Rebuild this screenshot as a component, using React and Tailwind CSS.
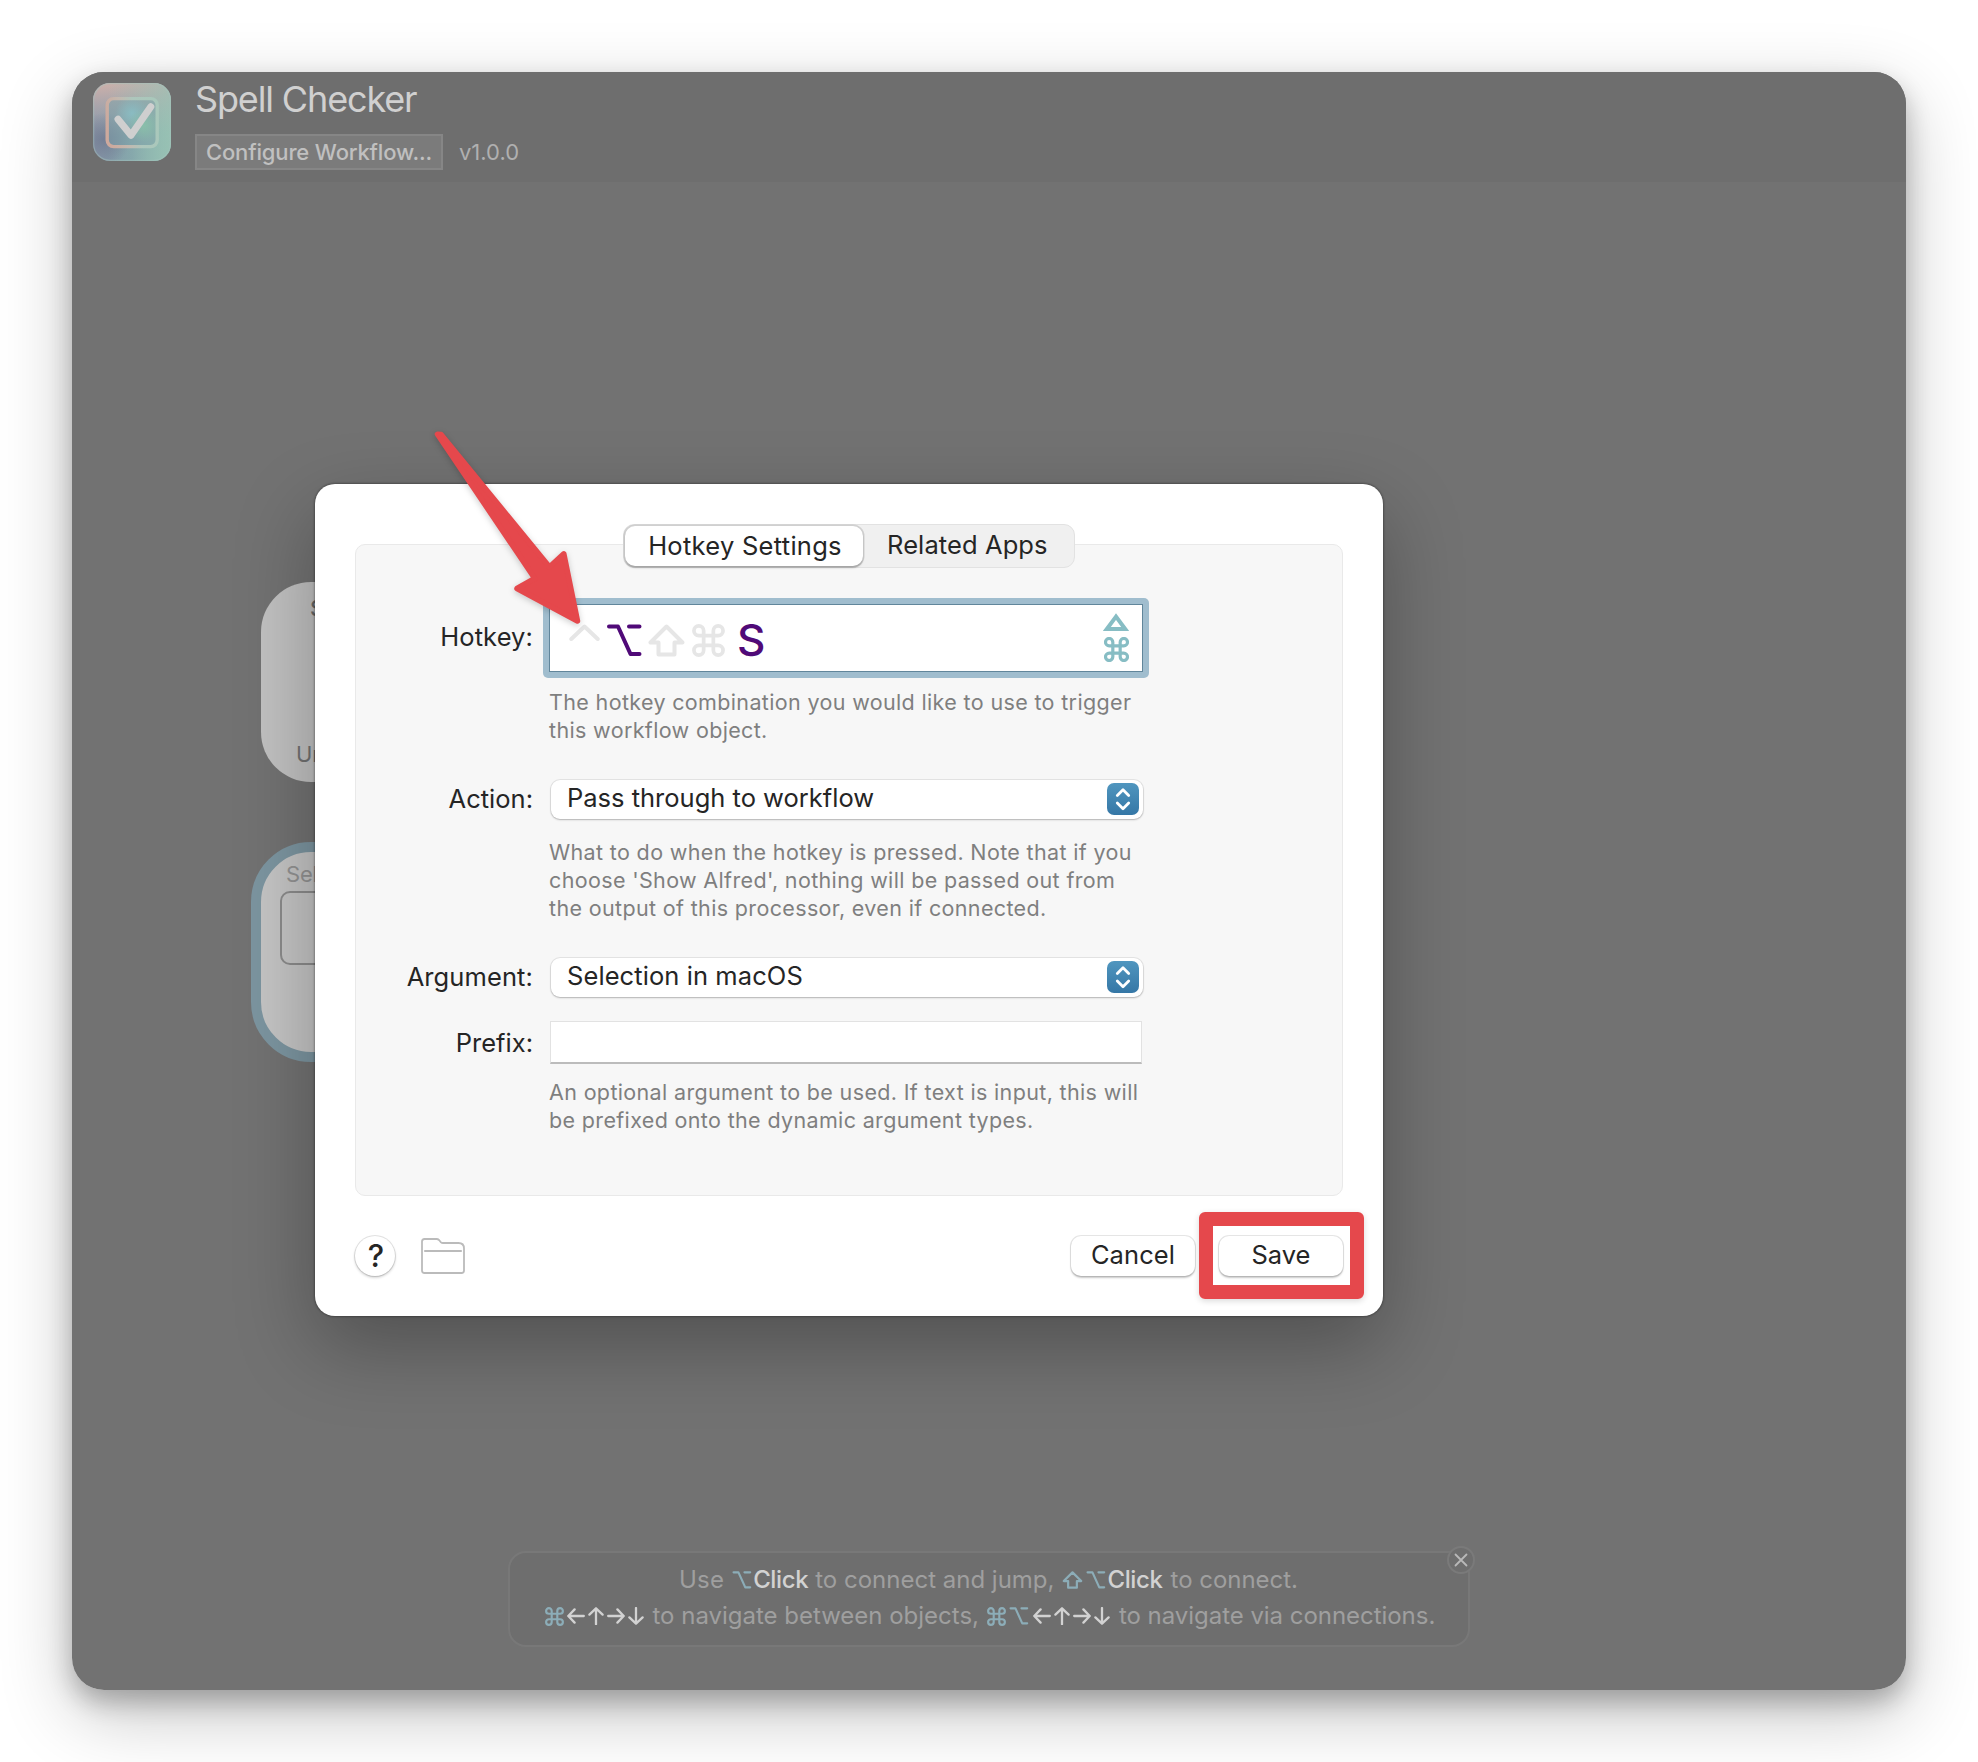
import React from "react";

function CommandGlyph({ className, stroke = 2.3 }) {
  return (
    <svg viewBox="1.8 1.8 20.4 20.4" fill="none" stroke="currentColor" strokeWidth={stroke} className={className}>
      <path d="M15 6v12a3 3 0 1 0 3-3H6a3 3 0 1 0 3 3V6a3 3 0 1 0-3 3h12a3 3 0 1 0-3-3" />
    </svg>
  );
}

function OptionGlyph({ className }) {
  return (
    <svg viewBox="0 0 35 33" fill="none" stroke="currentColor" strokeWidth="4" strokeLinecap="round" strokeLinejoin="round" className={className}>
      <path d="M2 2.5H11L23.5 30H32.5M22 2.5H32.5" />
    </svg>
  );
}

function ShiftGlyph({ className }) {
  return (
    <svg viewBox="0 0 37 33" fill="none" stroke="currentColor" strokeWidth="4" strokeLinecap="round" strokeLinejoin="round" className={className}>
      <path d="M18.5 2.5L2.5 18.5H10.5V30.5H26.5V18.5H34.5Z" />
    </svg>
  );
}

function Arrow({ d, className }) {
  return (
    <svg viewBox="0 0 18 18" fill="none" stroke="currentColor" strokeWidth="2.3" strokeLinecap="round" strokeLinejoin="round" className={className}>
      <path d={d} />
    </svg>
  );
}

function ArrowKeys() {
  return (
    <span className="flex items-center gap-[2px] text-[#d2d2d2]">
      <Arrow d="M1.3 9H16.8M7.6 2.4L1.3 9l6.3 6.6" className="size-[18px]" />
      <Arrow d="M9 1.3V17.2M2.4 7.6L9 1.3l6.6 6.3" className="size-[18px]" />
      <Arrow d="M1.2 9H16.7M10.4 2.4L16.7 9l-6.3 6.6" className="size-[18px]" />
      <Arrow d="M9 1V16.7M2.4 10.4L9 16.7l6.6-6.3" className="size-[18px]" />
    </span>
  );
}

function AppIcon() {
  return (
    <svg viewBox="0 0 78 78" className="size-[78px] shrink-0">
      <defs>
        <linearGradient id="base" x1="0" y1="0" x2="1" y2="0">
          <stop offset="0" stopColor="#8895a8" />
          <stop offset="0.5" stopColor="#7d9fa8" />
          <stop offset="1" stopColor="#8dc3b2" />
        </linearGradient>
        <linearGradient id="warm" x1="0.2" y1="0" x2="0.3" y2="1">
          <stop offset="0" stopColor="#cdb0aa" />
          <stop offset="0.45" stopColor="#b9aeb0" stopOpacity="0.35" />
          <stop offset="0.7" stopColor="#b9aeb0" stopOpacity="0" />
        </linearGradient>
        <linearGradient id="sage" x1="0.2" y1="0" x2="1" y2="0">
          <stop offset="0" stopColor="#a3c3b8" stopOpacity="0" />
          <stop offset="1" stopColor="#9cc0b4" stopOpacity="0.7" />
        </linearGradient>
        <radialGradient id="dusk" cx="0.14" cy="0.72" r="0.34">
          <stop offset="0" stopColor="#717990" stopOpacity="0.8" />
          <stop offset="1" stopColor="#717990" stopOpacity="0" />
        </radialGradient>
        <radialGradient id="mint" cx="0.75" cy="0.55" r="0.35">
          <stop offset="0" stopColor="#89bfaa" />
          <stop offset="1" stopColor="#89bfaa" stopOpacity="0" />
        </radialGradient>
        <radialGradient id="aqua" cx="0.5" cy="0.3" r="0.35">
          <stop offset="0" stopColor="#8abcc2" />
          <stop offset="1" stopColor="#8abcc2" stopOpacity="0" />
        </radialGradient>
        <linearGradient id="ring" x1="0" y1="0.6" x2="1" y2="0.4">
          <stop offset="0" stopColor="#cda99d" />
          <stop offset="0.35" stopColor="#c2b9b0" />
          <stop offset="0.6" stopColor="#adc6bc" />
          <stop offset="1" stopColor="#a9c8bb" />
        </linearGradient>
      </defs>
      <rect width="78" height="78" rx="17" fill="url(#base)" />
      <rect width="78" height="78" rx="17" fill="url(#warm)" />
      <rect width="78" height="78" rx="17" fill="url(#sage)" />
      <rect width="78" height="78" rx="17" fill="url(#dusk)" />
      <rect x="15" y="16" width="48" height="48" rx="6" fill="#7d9fa8" fillOpacity="0.5" />
      <rect x="15" y="16" width="48" height="48" rx="6" fill="url(#aqua)" />
      <rect x="15" y="16" width="48" height="48" rx="6" fill="url(#mint)" />
      <rect x="0.7" y="0.7" width="76.6" height="76.6" rx="16.4" fill="none" stroke="#a5c4bd" strokeOpacity="0.45" strokeWidth="1.2" />
      <rect x="14.2" y="15.6" width="50" height="48" rx="6.5" fill="none" stroke="url(#ring)" strokeWidth="3.4" />
      <path d="M25 36.3L38 52.2L57.8 23.8" fill="none" stroke="#cfcfcf" strokeWidth="7" strokeLinecap="round" strokeLinejoin="round" />
    </svg>
  );
}

function Header() {
  return (
    <header className="flex h-[110px] shrink-0 gap-6 bg-[#6e6e6e] pl-[21px] pt-[9px]">
      <div className="pt-0.5">
        <AppIcon />
      </div>
      <div className="flex flex-col gap-[17px]">
        <h1 className="text-[36px] leading-9 tracking-[-1.14px] text-[#d0d0d0]">Spell Checker</h1>
        <div className="flex items-center gap-4">
          <button className="flex h-9 w-[248px] items-center justify-center border-2 border-[#868686] bg-[#7b7b7b] text-[22px] font-medium tracking-[-0.15px] text-[#c0c0c0]">
            Configure Workflow...
          </button>
          <span className="text-[22px] text-[#b0b0b0]">v1.0.0</span>
        </div>
      </div>
    </header>
  );
}

function Nodes() {
  return (
    <>
      <div className="absolute left-[189px] top-[400px] flex h-[200px] w-[280px] flex-col justify-between rounded-[50px] bg-[#c1c1c1] pb-[14px] pt-3 text-[22px] leading-7 text-[#717171]">
        <span className="pl-[49px] font-medium text-[#6a6a6a]">Spell Check</span>
        <span className="pl-[35px]">Universal Action</span>
      </div>
      <div className="absolute left-[179px] top-[660px] h-[220px] w-[300px] rounded-[60px] border-[10px] border-[#7c95a0] bg-[#c4c4c4] pt-2">
        <div className="pl-[25px] text-[22px] leading-7 tracking-[-0.2px] text-[#929292]">Selection</div>
        <div className="ml-[19px] mt-[3px] h-[74px] w-[220px] rounded-[10px] border-2 border-[#8b8b8b]" />
      </div>
    </>
  );
}

function Label({ children, className = "" }) {
  return <div className={"w-[177px] shrink-0 text-right text-[25.5px] leading-8 text-[#252525] " + className}>{children}</div>;
}

function Help({ children, className = "" }) {
  return <p className={"ml-[193px] text-[21.5px] leading-7 tracking-[0.35px] text-[#7f7f7f] " + className}>{children}</p>;
}

function Select({ children, className = "" }) {
  return (
    <div className={"ml-[18px] flex h-[39px] w-[592px] items-center justify-between rounded-[9px] bg-white pl-4 pr-1 text-[25.5px] leading-8 text-[#252525] shadow-[0_0_0_1px_rgba(0,0,0,0.07),0_1px_2px_rgba(0,0,0,0.22)] " + className}>
      <span className="-mt-[3px]">{children}</span>
      <span className="-mt-px flex h-8 w-8 items-center justify-center rounded-[7px] bg-linear-to-b from-[#5096bf] to-[#3577a6] text-white">
        <svg viewBox="0 0 32 32" fill="none" stroke="currentColor" strokeWidth="2.8" strokeLinecap="round" strokeLinejoin="round" className="size-8">
          <path d="M10.3 12.4L16 6.7l5.7 5.7M10.3 20L16 25.7l5.7-5.7" />
        </svg>
      </span>
    </div>
  );
}

function Dialog() {
  return (
    <section className="absolute left-[243px] top-[302px] flex h-[832px] w-[1068px] flex-col rounded-[20px] bg-white px-10 pt-10 shadow-[0_30px_80px_rgba(0,0,0,0.29),0_0_2px_1px_rgba(0,0,0,0.28)]">
      <div className="relative z-10 ml-[268px] flex h-11 w-[452px] rounded-[11px] border border-[#e2e2e2] bg-[#f0f0f0] text-[25.5px] leading-8 text-[#252525]">
        <div className="ml-px mt-px flex h-[40px] w-[238px] items-center justify-center rounded-[10px] bg-white tracking-[0.28px] shadow-[0_0_0_1.5px_rgba(0,0,0,0.12),0_1.5px_2px_rgba(0,0,0,0.22)]">
          <span className="-mt-px pl-0.5">Hotkey Settings</span>
        </div>
        <div className="flex h-[39px] flex-1 items-center pl-6 tracking-[0.1px]">Related Apps</div>
      </div>

      <div className="-mt-6 h-[652px] rounded-[10px] border border-[#e9e9e9] bg-[#f7f7f7] pt-[53px]">
        <div className="flex items-center">
          <Label className="-mt-0.5 tracking-[0.1px]">Hotkey:</Label>
          <div className="ml-[10px] h-20 w-[606px] rounded-[5px] bg-[#a0bdce] p-[6px]">
            <div className="flex h-full items-center justify-between border border-[#61869b] bg-white pl-[19px] pr-[13px]">
              <div className="flex items-center pt-[5px] text-[#e6e6e6]">
                <svg viewBox="0 0 31 33" fill="none" stroke="currentColor" strokeWidth="4" strokeLinecap="round" strokeLinejoin="round" className="h-[33px] w-[31px]">
                  <path d="M2.3 15L15.5 2.5L28.7 15" />
                </svg>
                <OptionGlyph className="ml-[7px] h-[33px] w-[35px] text-[#500a78]" />
                <ShiftGlyph className="ml-1.5 h-[33px] w-[37px]" />
                <CommandGlyph className="ml-[7px] size-[33px]" />
                <span className="ml-3 text-[44px] font-medium leading-[33px] text-[#500a78]">S</span>
              </div>
              <div className="-mt-px flex flex-col items-center gap-[6px] text-[#87bdc4]">
                <svg viewBox="0 0 26 18" fill="none" stroke="currentColor" strokeWidth="4" className="h-[18px] w-[26px]">
                  <path d="M13 3.6L3.8 16H22.2Z" />
                </svg>
                <CommandGlyph className="size-[25px]" stroke={2.6} />
              </div>
            </div>
          </div>
        </div>
        <Help className="mt-[10px]">
          The hotkey combination you would like to use to trigger
          <br />
          this workflow object.
        </Help>

        <div className="mt-9 flex items-center">
          <Label className="-mt-0.5">Action:</Label>
          <Select>Pass through to workflow</Select>
        </div>
        <Help className="mt-[19px]">
          What to do when the hotkey is pressed. Note that if you
          <br />
          choose 'Show Alfred', nothing will be passed out from
          <br />
          the output of this processor, even if connected.
        </Help>

        <div className="mt-9 flex items-center">
          <Label className="-mt-0.5 tracking-[0.1px]">Argument:</Label>
          <Select className="tracking-[0.08px]">Selection in macOS</Select>
        </div>

        <div className="mt-6 flex items-center">
          <Label>Prefix:</Label>
          <div className="ml-[17px] h-[43px] w-[592px] border border-b-2 border-[#e2e2e2] border-b-[#bcbcbc] bg-white" />
        </div>
        <Help className="mt-[14px]">
          An optional argument to be used. If text is input, this will
          <br />
          be prefixed onto the dynamic argument types.
        </Help>
      </div>

      <div className="mt-10 flex h-10 items-center text-[25.5px] leading-8 text-[#252525]">
        <div className="flex size-10 items-center justify-center rounded-full bg-white pl-0.5 text-[31px] font-medium shadow-[0_0_0_1px_rgba(0,0,0,0.1),0_1.5px_3px_rgba(0,0,0,0.22)]">?</div>
        <svg viewBox="0 0 44 36" fill="none" stroke="#bbbbbb" strokeWidth="1.8" strokeLinejoin="round" className="ml-[26px] h-9 w-11">
          <path d="M1 3.5Q1 1 3.5 1H15.5Q17 1 18 2L20 4.3Q20.7 5 22 5H37.5Q43 5 43 10.5V32.5Q43 35 40.5 35H3.5Q1 35 1 32.5ZM3.2 13H40.8" />
        </svg>
        <button className="ml-auto h-10 w-[124px] rounded-[10px] bg-white pb-0.5 tracking-[0.1px] shadow-[0_0_0_1px_rgba(0,0,0,0.09),0_1.5px_2px_rgba(0,0,0,0.22)]">Cancel</button>
        <div className="relative ml-6">
          <button className="h-10 w-[124px] rounded-[10px] bg-white pb-0.5 shadow-[0_0_0_1px_rgba(0,0,0,0.09),0_1.5px_2px_rgba(0,0,0,0.22)]">Save</button>
          <div className="absolute -left-5 -top-6 h-[87px] w-[165px] rounded-[6px] border-[14px] border-[#e5484c] shadow-[0_2px_6px_rgba(0,0,0,0.15)]" />
        </div>
      </div>
    </section>
  );
}

function Hint() {
  const key = "text-[#8cadb8]";
  const strong = "font-medium tracking-[-0.38px] text-[#d2d2d2]";
  return (
    <div className="relative mb-[43px] flex h-24 w-[962px] flex-col rounded-[18px] border-2 border-[#787878] bg-[#6e6e6e] pt-[9px] text-2xl leading-9 text-[#9f9f9f]">
      <div className="flex h-9 items-center pl-[169px]">
        <span className="tracking-[0.2px]">Use</span>
        <OptionGlyph className={"ml-2 h-[18px] w-5 " + key} />
        <span className={"ml-px " + strong}>Click</span>
        <span className="ml-[7px]">to connect and jump,</span>
        <ShiftGlyph className={"ml-[8px] h-[18px] w-[21px] " + key} />
        <OptionGlyph className={"ml-[3px] h-[18px] w-5 " + key} />
        <span className={"ml-px " + strong}>Click</span>
        <span className="ml-[8px] tracking-[-0.03px]">to connect.</span>
      </div>
      <div className="flex h-9 items-center pl-[34.5px]">
        <CommandGlyph className={"mr-[3px] size-[19px] " + key} />
        <ArrowKeys />
        <span className="ml-[8px] tracking-[-0.01px]">to navigate between objects,</span>
        <CommandGlyph className={"ml-[8px] size-[19px] " + key} />
        <OptionGlyph className={"ml-[3px] mr-[4px] h-[18px] w-5 " + key} />
        <ArrowKeys />
        <span className="ml-[8px] tracking-[-0.04px]">to navigate via connections.</span>
      </div>
      <div className="absolute -right-[7px] -top-[7px] flex size-7 items-center justify-center rounded-full border-2 border-[#7a7a7a] bg-[#6e6e6e] text-[#b9b9b9]">
        <svg viewBox="0 0 14 14" fill="none" stroke="currentColor" strokeWidth="1.8" strokeLinecap="round" className="size-[14px]">
          <path d="M1.5 1.5l11 11M12.5 1.5l-11 11" />
        </svg>
      </div>
    </div>
  );
}

export default function App() {
  return (
    <div className="h-[1762px] w-[1978px] overflow-hidden bg-white p-[72px] font-['Inter','Liberation_Sans',sans-serif]">
      <div className="relative h-[1618px] w-[1834px] rounded-[32px] shadow-[0_12px_24px_rgba(0,0,0,0.24),0_24px_72px_rgba(0,0,0,0.24)]">
        <div className="flex h-full flex-col overflow-hidden rounded-[32px] bg-[#727272]">
          <Header />
          <main className="relative flex flex-1 flex-col items-center justify-end">
            <Nodes />
            <Hint />
            <Dialog />
          </main>
        </div>
        <svg viewBox="0 0 170 210" className="absolute left-[348px] top-[348px] h-[210px] w-[170px] drop-shadow-[0_2px_3px_rgba(0,0,0,0.2)]">
          <path d="M17.5 14.2L21 14.5L129.5 147L143.8 133.8L157.5 201L97 168.5L114.8 158.5Z" fill="#e5484c" stroke="#e5484c" strokeWidth="5.5" strokeLinejoin="round" />
        </svg>
      </div>
    </div>
  );
}
